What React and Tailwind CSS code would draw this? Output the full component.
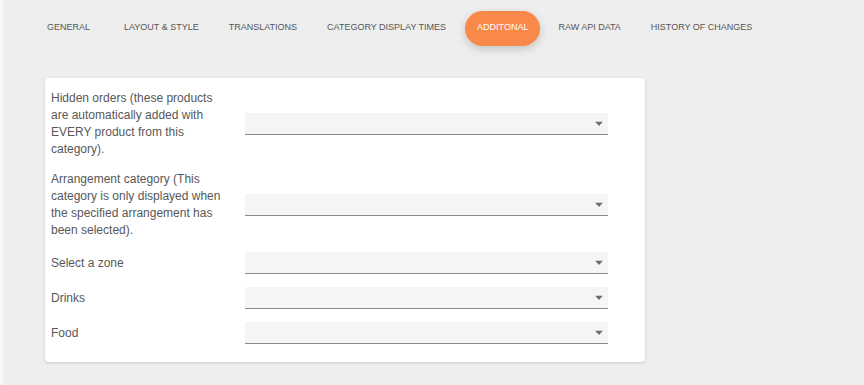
import React from "react";

const tabs = [
  "General",
  "Layout & Style",
  "Translations",
  "Category display times",
  "Additonal",
  "Raw API data",
  "History of changes",
];

const fields = [
  "Hidden orders (these products are automatically added with EVERY product from this category).",
  "Arrangement category (This category is only displayed when the specified arrangement has been selected).",
  "Select a zone",
  "Drinks",
  "Food",
];

const SelectBox = () => (
  <div className="relative h-[22px] w-[363px] shrink-0 bg-[#f5f5f5] border-b border-[#8a8a8a]">
    <svg
      className="absolute right-[5px] top-1/2 -translate-y-1/2"
      width="8"
      height="5"
      viewBox="0 0 8 5"
    >
      <path d="M0 0 L8 0 L4 4.5 Z" fill="#6b6b6b" />
    </svg>
  </div>
);

const App = () => {
  const active = "Additonal";

  return (
    <div
      className="w-[864px] h-[385px] bg-[#eeeeee] border-l-[3px] border-[#f7f7f7] overflow-hidden"
      style={{ fontFamily: '"Liberation Sans", Arial, sans-serif' }}
    >
      {/* tab bar */}
      <div className="flex items-center h-[55px] pl-[29px] pt-[1px]">
        {tabs.map((t, i) =>
          t === active ? (
            <button
              key={t}
              className="h-[35px] px-[12px] ml-[4px] mr-[3px] rounded-full bg-[#f9884b] text-white text-[9px] uppercase shadow-[0_3px_8px_rgba(0,0,0,0.18)]"
            >
              {t}
            </button>
          ) : (
            <button
              key={t}
              className={`h-[35px] px-[15px] text-[9px] uppercase text-[#555] ${i === 1 ? "ml-[4px]" : ""}`}
            >
              {t}
            </button>
          )
        )}
      </div>

      {/* card */}
      <div className="ml-[42px] mt-[23px] w-[600px] bg-white rounded-[4px] shadow-[0_1px_3px_rgba(0,0,0,0.15)] pt-3 pb-[18px] pl-[6px] flex flex-col gap-[13px]">
        {fields.map((f) => (
          <div key={f} className="flex items-center">
            <div className="w-[194px] pr-[18px] text-[12px] leading-[17px] text-[#585858]">
              {f}
            </div>
            <SelectBox />
          </div>
        ))}
      </div>
    </div>
  );
};

export default App;
